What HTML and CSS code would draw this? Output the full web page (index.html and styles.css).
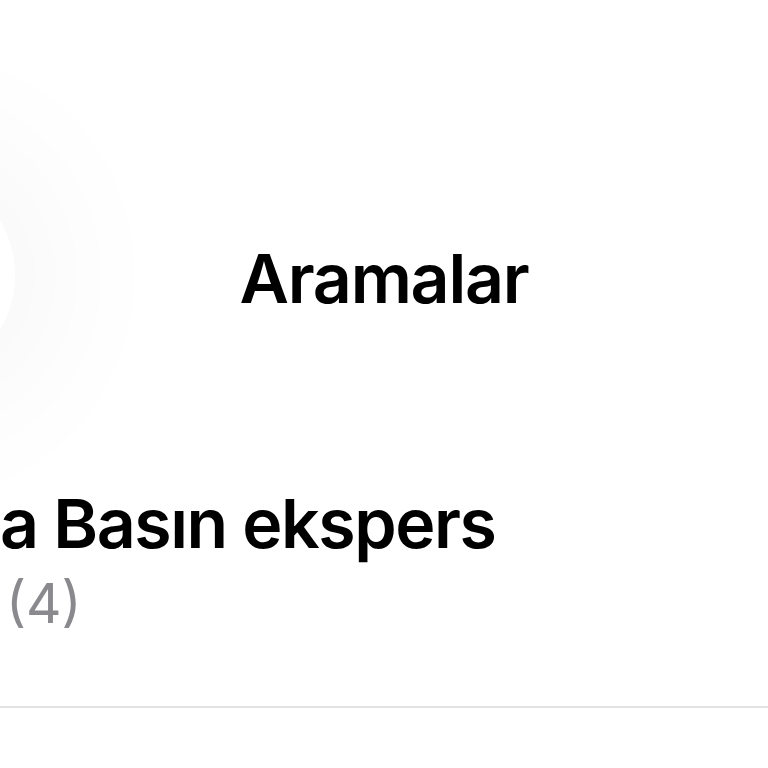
FILE: index.html
```html
<!DOCTYPE html>
<html lang="tr">
<head>
<meta charset="utf-8">
<title>Aramalar</title>
<link rel="stylesheet" href="styles.css">
</head>
<body>
<div class="page">
  <div class="back-button" aria-label="Geri"></div>
  <header class="header">
    <h1 class="title">Aramalar</h1>
  </header>
  <div class="row">
    <div class="name">a Basın ekspers</div>
    <div class="count">(4)</div>
  </div>
  <div class="divider"></div>
</div>
</body>
</html>
```
FILE: styles.css
```css
html, body {
  margin: 0;
  padding: 0;
  background: #ffffff;
}
.page {
  position: relative;
  width: 768px;
  height: 768px;
  overflow: hidden;
  font-family: Inter, "Liberation Sans", sans-serif;
  color: #000000;
}
.back-button {
  position: absolute;
  left: -201px;
  top: 167px;
  width: 216px;
  height: 216px;
  border-radius: 50%;
  background: #ffffff;
  box-shadow: 0 0 150px 40px rgba(0, 0, 0, 0.04);
}
.header {
  padding-top: 237px;
  display: flex;
  justify-content: center;
}
.title {
  margin: 0;
  font-size: 68px;
  line-height: 82px;
  font-weight: 600;
  letter-spacing: -1.25px;
}
.row {
  margin-top: 163px;
  display: flex;
  flex-direction: column;
}
.name {
  font-size: 68px;
  line-height: 82px;
  font-weight: 600;
  letter-spacing: -1.45px;
  white-space: nowrap;
}
.count {
  margin-top: 6px;
  padding-left: 6px;
  font-size: 55px;
  line-height: 66px;
  font-weight: 400;
  color: #8a8a8e;
}
.divider {
  margin-top: 70px;
  height: 2px;
  background: #e2e2e4;
}
```
